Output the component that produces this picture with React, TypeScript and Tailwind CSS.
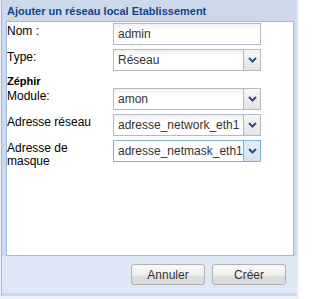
import React from "react"

const font = { fontFamily: '"Liberation Sans", Arial, sans-serif' }

function Chevron() {
  return (
    <svg width="9" height="6" viewBox="0 0 9 6" className="block">
      <path d="M1 1 L4.5 4.5 L8 1" fill="none" stroke="#2f4f80" strokeWidth="2" />
    </svg>
  )
}

function TextField({ value }: { value: string }) {
  return (
    <div className="w-[148px] h-[22px] border border-[#b5b8c8] bg-[linear-gradient(#f0f0f0,#ffffff_35%)] flex items-center px-[4px] text-[12px] text-[#333] overflow-hidden whitespace-nowrap">
      {value}
    </div>
  )
}

function SelectField({ value, focused = false }: { value: string; focused?: boolean }) {
  return (
    <div
      className={
        focused
          ? "w-[148px] h-[22px] border border-[#7eadd9] bg-white flex overflow-hidden"
          : "w-[148px] h-[22px] border border-[#b5b8c8] bg-[linear-gradient(#f0f0f0,#ffffff_35%)] flex overflow-hidden"
      }
    >
      <div className="flex-1 min-w-0 flex items-center pl-[4px] text-[12px] text-[#333] whitespace-nowrap overflow-hidden">
        {value}
      </div>
      <div
        className={
          focused
            ? "w-[17px] shrink-0 border-l border-[#7eadd9] bg-[linear-gradient(#e4eefa,#d2e2f5)] flex items-center justify-center"
            : "w-[17px] shrink-0 border-l border-[#b5b8c8] bg-[linear-gradient(#f7f7f7,#e4e4e4)] flex items-center justify-center"
        }
      >
        <Chevron />
      </div>
    </div>
  )
}

function Row({ label, children }: { label: string; children: React.ReactNode }) {
  return (
    <div className="flex">
      <div className="w-[106px] pt-[2px] pr-[4px] text-[12px] leading-[13px] text-black">{label}</div>
      {children}
    </div>
  )
}

function Button({ label }: { label: string }) {
  return (
    <button className="w-[74px] h-[21px] rounded-[3px] border border-[#b0b0b0] bg-[linear-gradient(#f8f8f8_0%,#f0f0f0_55%,#dcdcdc_56%,#dcdcdc_100%)] text-[12px] text-[#333] leading-none">
      {label}
    </button>
  )
}

export default function App() {
  return (
    <div className="w-[299px] h-[299px] bg-[#edf2f8] overflow-hidden" style={font}>
      <div className="ml-px w-[296px] h-[296px] border-l border-[#99bbe8] bg-[#ccd9ea] flex flex-col">
        <div className="h-[21px] shrink-0 pl-[5px] pt-[5px] text-[11px] leading-[13px] font-bold text-[#15428b] whitespace-nowrap">
          Ajouter un réseau local Etablissement
        </div>
        <div className="ml-[4px] w-[288px] h-[235px] shrink-0 border border-[#99bbe8] bg-white pt-px flex flex-col">
          <div className="flex flex-col gap-[4px]">
            <Row label="Nom :">
              <TextField value="admin" />
            </Row>
            <Row label="Type:">
              <SelectField value="Réseau" />
            </Row>
          </div>
          <div className="mt-[4px] h-[13px] text-[11px] leading-[13px] font-bold text-black">Zéphir</div>
          <div className="flex flex-col gap-[4px]">
            <Row label="Module:">
              <SelectField value="amon" />
            </Row>
            <Row label="Adresse réseau">
              <SelectField value="adresse_network_eth1" />
            </Row>
            <Row label="Adresse de masque">
              <SelectField value="adresse_netmask_eth1" focused />
            </Row>
          </div>
        </div>
        <div className="h-[37px] shrink-0 bg-[#dfe8f6] flex items-center justify-end gap-[7px] pr-[11px]">
          <Button label="Annuler" />
          <Button label="Créer" />
        </div>
      </div>
    </div>
  )
}
